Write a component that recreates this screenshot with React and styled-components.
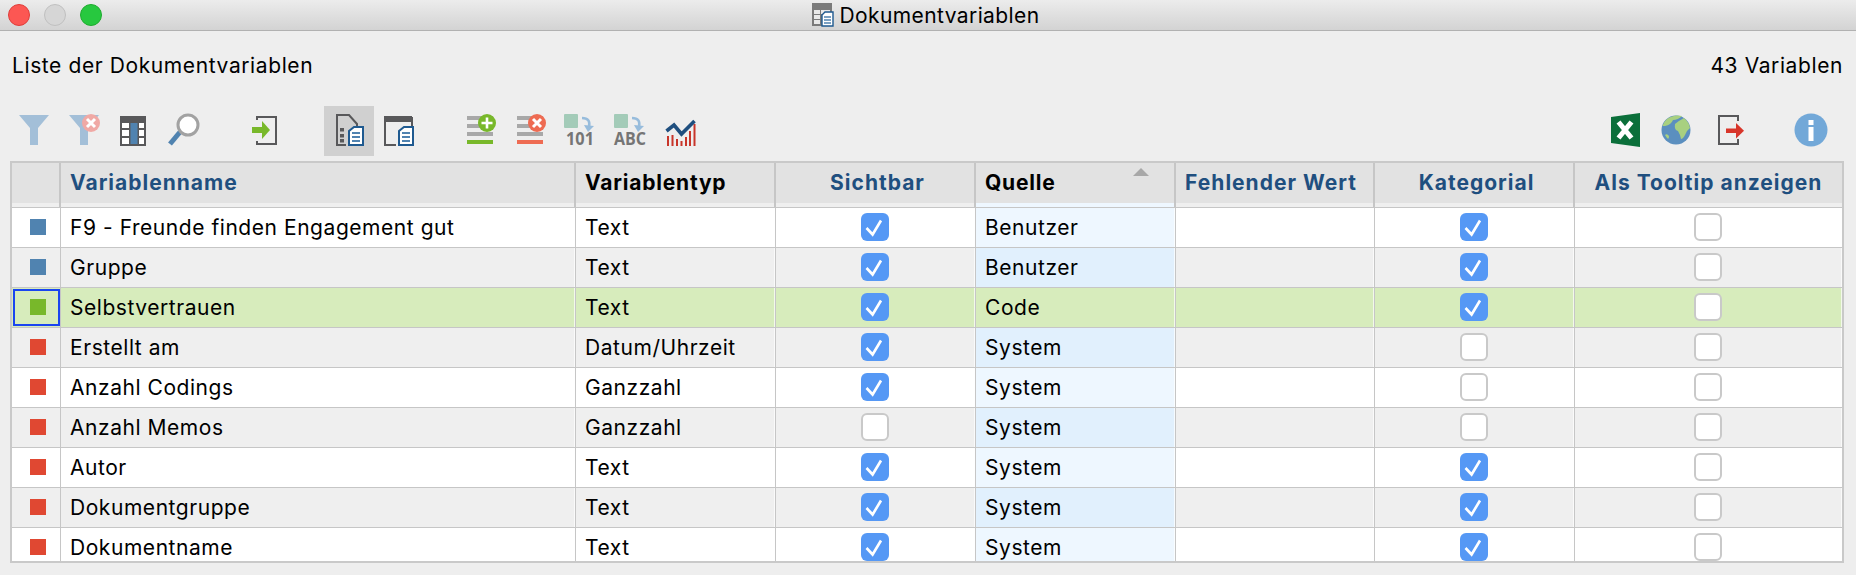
import React from 'react';
import styled, { createGlobalStyle } from 'styled-components';

const GlobalStyle = createGlobalStyle`
    html, body {
        margin: 0;
        padding: 0;
        height: 100%;
        background: #eeeeee;
        overflow: hidden;
    }
    body {
        font-family: Inter, "Liberation Sans", sans-serif;
        color: #000;
    }
`;

const Window = styled.div`
    width: 1856px;
    height: 575px;
    display: flex;
    flex-direction: column;
    overflow: hidden;
`;

const TitleBar = styled.div`
    height: 30px;
    flex: none;
    position: relative;
    display: flex;
    align-items: center;
    justify-content: center;
    gap: 5px;
    padding-right: 4px;
    background: linear-gradient(#ececec, #d3d3d3);
    border-bottom: 1px solid #b1b1b1;
    font-size: 21px;
    letter-spacing: 0.4px;
`;

const Lights = styled.div`
    position: absolute;
    left: 8px;
    top: 4px;
    display: flex;
    gap: 14px;
`;

const Light = styled.span`
    width: 22px;
    height: 22px;
    border-radius: 50%;
    box-sizing: border-box;
    background: ${p => p.$color};
    border: 1px solid ${p => p.$edge};
`;

const InfoRow = styled.div`
    display: flex;
    justify-content: space-between;
    padding: 23px 13px 0 12px;
    height: 24px;
    line-height: 24px;
    font-size: 21px;
    letter-spacing: 0.6px;
    flex: none;
`;

const Toolbar = styled.div`
    display: flex;
    padding: 0 20px 0 9px;
    height: 50px;
    margin-top: 28px;
    flex: none;
`;

const ToolGroup = styled.div`
    display: flex;
    margin-left: ${p => p.$offset || 0}px;
    gap: ${p => p.$gap || 0}px;
`;

const Spacer = styled.div`
    flex: 1;
`;

const ToolButton = styled.div`
    width: 50px;
    height: 50px;
    background: ${p => (p.$active ? '#d0d0d0' : 'transparent')};
    svg {
        display: block;
    }
`;

const Table = styled.div`
    margin: 5px 0 0 10px;
    width: 1834px;
    height: 402px;
    box-sizing: border-box;
    border: 2px solid #c9c9c9;
    overflow: hidden;
`;

const COLUMNS = '49px 515px 200px 200px 200px 199px 200px 267px';

const HeaderRow = styled.div`
    display: grid;
    grid-template-columns: ${COLUMNS};
    height: 44px;
    border-bottom: 1px solid #c6c6c6;
    box-sizing: content-box;
    background: #efefef;
`;

const HeaderCell = styled.div`
    position: relative;
    background: ${p => (p.$tinted ? '#eef7ff' : 'transparent')};
    border-right: 2px solid #c6c6c6;
    &:last-child {
        border-right: none;
    }
`;

const HeaderLabel = styled.div`
    height: 40px;
    line-height: 40px;
    background: #e2e2e2;
    padding-left: ${p => (p.$center ? Math.max(p.$nudge || 0, 0) : 9)}px;
    padding-right: ${p => (p.$center ? Math.max(-(p.$nudge || 0), 0) : 9)}px;
    text-align: ${p => (p.$center ? 'center' : 'left')};
    font-size: 21px;
    letter-spacing: ${p => (p.$sorted ? 0.8 : 1)}px;
    font-weight: 700;
    white-space: nowrap;
    color: ${p => (p.$sorted ? '#000' : '#1f4f7f')};
`;

const SortMark = styled.span`
    position: absolute;
    right: 25px;
    top: 5px;
    width: 0;
    height: 0;
    border-left: 8px solid transparent;
    border-right: 8px solid transparent;
    border-bottom: 8px solid #a8a8a8;
`;

const Row = styled.div`
    display: grid;
    grid-template-columns: ${COLUMNS};
    height: 39px;
    box-sizing: content-box;
    border-bottom: 1px solid #c6c6c6;
    background: ${p => p.$bg};
    font-size: 21px;
    letter-spacing: 0.55px;
`;

const Cell = styled.div`
    display: flex;
    align-items: center;
    justify-content: ${p => (p.$center ? 'center' : 'flex-start')};
    padding-bottom: ${p => (p.$center ? 2 : 0)}px;
    padding-left: ${p => (p.$center ? 0 : 9)}px;
    white-space: nowrap;
    background: ${p => p.$bg || 'transparent'};
    border-right: 1px solid #c6c6c6;
    box-shadow: inset -1px 0 0 rgba(255, 255, 255, 0.7);
    &:last-child {
        border-right: none;
    }
`;

const MarkerCell = styled.div`
    display: flex;
    align-items: center;
    justify-content: center;
    padding: 0 0 2px 3px;
    box-sizing: border-box;
    border-right: 1px solid #c6c6c6;
    outline: ${p => (p.$focused ? '2px solid #1a45f0' : 'none')};
    outline-offset: -3px;
`;

const Marker = styled.span`
    width: 16px;
    height: 16px;
    background: ${p => p.$color};
`;

const CheckBox = styled.span`
    width: 28px;
    height: 28px;
    margin-right: 2px;
    box-sizing: border-box;
    border-radius: 6px;
    display: flex;
    align-items: center;
    justify-content: center;
    background: ${p => (p.$checked ? '#5598f5' : '#fff')};
    border: ${p => (p.$checked ? 'none' : '2px solid #c9c9c9')};
`;

const Check = ({ on }) => (
    <CheckBox $checked={on}>
        {on && (
            <svg width="20" height="20" viewBox="0 0 20 20">
                <path d="M1.5 11 L7.6 17.5 L16 3.5" fill="none" stroke="#fff" strokeWidth="2.6" />
            </svg>
        )}
    </CheckBox>
);

const BLUE = '#5083b0';
const GREEN = '#78b82a';
const RED = '#e04832';
const GREY = '#58585a';
const DARKBLUE = '#1f5a90';

const Svg = ({ children }) => (
    <svg width="50" height="50" viewBox="0 0 50 50">
        {children}
    </svg>
);

const FunnelIcon = () => (
    <Svg>
        <polygon points="10,9 40,9 29,22 29,39 21,39 21,22" fill="#a3bfd8" />
    </Svg>
);

const FunnelClearIcon = () => (
    <Svg>
        <polygon points="10,9 40,9 29,22 29,39 21,39 21,22" fill="#a3bfd8" />
        <circle cx="32" cy="17" r="9" fill="#f0a9a5" />
        <path d="M28 13 L36 21 M36 13 L28 21" stroke="#fff" strokeWidth="3" />
    </Svg>
);

const TableIcon = () => (
    <Svg>
        <rect x="11" y="10" width="26" height="30" fill={GREY} />
        <rect x="13" y="17" width="7" height="5" fill="#fff" />
        <rect x="13" y="24" width="7" height="6" fill="#fff" />
        <rect x="13" y="32" width="7" height="6" fill="#fff" />
        <rect x="21.5" y="17" width="7" height="21" fill={BLUE} />
        <rect x="30" y="17" width="5" height="5" fill="#fff" />
        <rect x="30" y="24" width="5" height="6" fill="#fff" />
        <rect x="30" y="32" width="5" height="6" fill="#fff" />
    </Svg>
);

const SearchIcon = () => (
    <Svg>
        <path d="M21 26 L11 38" stroke={BLUE} strokeWidth="5" />
        <circle cx="29" cy="19" r="10" fill="#fff" stroke="#a2a2a2" strokeWidth="3" />
    </Svg>
);

const ImportIcon = () => (
    <Svg>
        <path d="M18 14 V11 H37 V38 H18 V35" fill="none" stroke={GREY} strokeWidth="2" />
        <rect x="13" y="21" width="11" height="6" fill={GREEN} />
        <polygon points="23,15 31,24 23,33" fill={GREEN} />
    </Svg>
);

const SmallDoc = () => (
    <g>
        <path d="M25 39 V25 L30 21 H39 V39 Z" fill="#fff" stroke={DARKBLUE} strokeWidth="2" />
        <path d="M28 27 H36 M28 31 H36 M28 35 H36" stroke={BLUE} strokeWidth="2" />
    </g>
);

const DocFieldsIcon = () => (
    <Svg>
        <path d="M22 39 H13 V9 H25 L33 18 V20" fill="none" stroke={GREY} strokeWidth="2" />
        <rect x="16" y="22" width="4" height="3.5" fill={GREY} />
        <rect x="16" y="28" width="4" height="3.5" fill={GREY} />
        <rect x="16" y="33" width="4" height="3.5" fill={GREY} />
        <SmallDoc />
    </Svg>
);

const WindowDocIcon = () => (
    <Svg>
        <path d="M22 39 H11 V12 H38 V20" fill="none" stroke={GREY} strokeWidth="2" />
        <rect x="10" y="10" width="28" height="6" fill={GREY} />
        <SmallDoc />
    </Svg>
);

const RowsIcon = ({ color, children }) => (
    <Svg>
        <rect x="11" y="10" width="26" height="4" fill="#a8a8a8" />
        <rect x="11" y="18" width="26" height="4" fill="#a8a8a8" />
        <rect x="11" y="26" width="26" height="4" fill="#a8a8a8" />
        <rect x="11" y="34" width="26" height="4" fill={color} />
        <circle cx="31" cy="17" r="9" fill={color} />
        {children}
    </Svg>
);

const ConvertIcon = ({ label, width, x }) => (
    <Svg>
        <rect x="8" y="8" width="14" height="14" rx="1" fill="#a3cbb8" />
        <path d="M26 12 Q35 12 33 21" fill="none" stroke="#97bcdc" strokeWidth="2.5" />
        <polygon points="28,19 38,20 32,26" fill="#97bcdc" />
        <text
            x={x}
            y="38.5"
            textLength={width}
            lengthAdjust="spacingAndGlyphs"
            fontFamily="Open Sans, sans-serif"
            fontWeight="700"
            fontSize="17"
            fill="#757575"
        >
            {label}
        </text>
    </Svg>
);

const ChartIcon = () => (
    <Svg>
        <path
            d="M11 30 H13 V40 H11 Z M15.5 29 H17.5 V40 H15.5 Z M20 33 H22 V40 H20 Z M24.5 35 H26.5 V40 H24.5 Z M29 31 H31 V40 H29 Z M33 25 H35 V40 H33 Z M37.5 18 H39.5 V40 H37.5 Z"
            fill="#c8352a"
        />
        <path d="M10.5 25 L18 19 L25.5 28 L38.5 15" fill="none" stroke="#1f4f7f" strokeWidth="3.6" />
    </Svg>
);

const ExcelIcon = () => (
    <Svg>
        <polygon points="11,11 40,7 40,41 11,37" fill="#0b6f3a" />
        <path d="M18.5 16 L31.5 32 M31.5 16 L18.5 32" stroke="#fff" strokeWidth="5" />
    </Svg>
);

const GlobeIcon = () => (
    <Svg>
        <circle cx="25" cy="24" r="14.5" fill="#5b8fbf" />
        <path
            d="M16 13 Q23 8 31 10 Q27 14 22 14 Q20 19 14 20 L11.5 20 Q12.5 16 16 13 Z M24 18 Q29 14 33 12 Q38 16 39 22 Q36 24 34 29 Q32 33 30 33 Q29 28 27 25 Q23 24 24 18 Z M14 29 Q16 27 18 30 Q18 34 16 32 Z"
            fill="#a8d080"
        />
    </Svg>
);

const ExitIcon = () => (
    <Svg>
        <path d="M33 15 V10 H14 V38 H33 V33" fill="none" stroke={GREY} strokeWidth="2" />
        <rect x="21" y="22.5" width="11" height="4.5" fill="#d8352a" />
        <polygon points="31,17 39,24.7 31,32.5" fill="#d8352a" />
    </Svg>
);

const InfoIcon = () => (
    <Svg>
        <circle cx="25" cy="24" r="16.5" fill="#72a8d8" />
        <rect x="22.5" y="14" width="5" height="5" fill="#fff" />
        <rect x="22.5" y="21" width="5" height="14" fill="#fff" />
    </Svg>
);

const TitleIcon = () => (
    <svg width="22" height="24" viewBox="0 0 22 24">
        <rect x="0" y="0" width="20" height="23" fill="#7a7a7a" />
        <path d="M2 7 H8 V11 H2 Z M9 7 H18 V11 H9 Z M2 12 H8 V16 H2 Z M2 17 H8 V21 H2 Z" fill="#e8e8e8" />
        <path d="M10 23 V12 L13 9 H21 V23 Z" fill="#fff" stroke={DARKBLUE} strokeWidth="1.4" />
        <path d="M12 14 H19 M12 17 H19 M12 20 H19" stroke={BLUE} strokeWidth="1.4" />
    </svg>
);

const headers = [
    { label: '' },
    { label: 'Variablenname' },
    { label: 'Variablentyp', sorted: true },
    { label: 'Sichtbar', center: true, nudge: 5 },
    { label: 'Quelle', sorted: true, tinted: true, mark: true },
    { label: 'Fehlender Wert', center: true, nudge: -7 },
    { label: 'Kategorial', center: true, nudge: 5 },
    { label: 'Als Tooltip anzeigen', center: true },
];

const rows = [
    ['F9 - Freunde finden Engagement gut', 'Text', true, 'Benutzer', true, BLUE],
    ['Gruppe', 'Text', true, 'Benutzer', true, BLUE],
    ['Selbstvertrauen', 'Text', true, 'Code', true, GREEN],
    ['Erstellt am', 'Datum/Uhrzeit', true, 'System', false, RED],
    ['Anzahl Codings', 'Ganzzahl', true, 'System', false, RED],
    ['Anzahl Memos', 'Ganzzahl', false, 'System', false, RED],
    ['Autor', 'Text', true, 'System', true, RED],
    ['Dokumentgruppe', 'Text', true, 'System', true, RED],
    ['Dokumentname', 'Text', true, 'System', true, RED],
];

const App = () => {
    return (
        <Window>
            <GlobalStyle />
            <TitleBar>
                <Lights>
                    <Light $color="#fc5753" $edge="#df3d3a" />
                    <Light $color="#d6d6d6" $edge="#c0c0c0" />
                    <Light $color="#27c83f" $edge="#1eab2e" />
                </Lights>
                <TitleIcon />
                Dokumentvariablen
            </TitleBar>
            <InfoRow>
                <span>Liste der Dokumentvariablen</span>
                <span>43 Variablen</span>
            </InfoRow>
            <Toolbar>
                <ToolGroup>
                    <ToolButton><FunnelIcon /></ToolButton>
                    <ToolButton><FunnelClearIcon /></ToolButton>
                    <ToolButton><TableIcon /></ToolButton>
                    <ToolButton><SearchIcon /></ToolButton>
                </ToolGroup>
                <ToolGroup $offset={30}>
                    <ToolButton><ImportIcon /></ToolButton>
                </ToolGroup>
                <ToolGroup $offset={35}>
                    <ToolButton $active><DocFieldsIcon /></ToolButton>
                    <ToolButton><WindowDocIcon /></ToolButton>
                </ToolGroup>
                <ToolGroup $offset={32}>
                    <ToolButton>
                        <RowsIcon color={GREEN}>
                            <path d="M31 11.5 V22.5 M25.5 17 H36.5" stroke="#fff" strokeWidth="2.6" />
                        </RowsIcon>
                    </ToolButton>
                    <ToolButton>
                        <RowsIcon color="#ee6b52">
                            <path d="M27 13 L35 21 M35 13 L27 21" stroke="#fff" strokeWidth="3" />
                        </RowsIcon>
                    </ToolButton>
                    <ToolButton><ConvertIcon label="101" x={10} width={28} /></ToolButton>
                    <ToolButton><ConvertIcon label="ABC" x={8} width={32} /></ToolButton>
                    <ToolButton><ChartIcon /></ToolButton>
                </ToolGroup>
                <Spacer />
                <ToolGroup $gap={1}>
                    <ToolButton><ExcelIcon /></ToolButton>
                    <ToolButton><GlobeIcon /></ToolButton>
                </ToolGroup>
                <ToolGroup $offset={4}>
                    <ToolButton><ExitIcon /></ToolButton>
                </ToolGroup>
                <ToolGroup $offset={31}>
                    <ToolButton><InfoIcon /></ToolButton>
                </ToolGroup>
            </Toolbar>
            <Table>
                <HeaderRow>
                    {headers.map((h, i) => (
                        <HeaderCell key={i} $tinted={h.tinted}>
                            <HeaderLabel $center={h.center} $sorted={h.sorted} $nudge={h.nudge}>{h.label}</HeaderLabel>
                            {h.mark && <SortMark />}
                        </HeaderCell>
                    ))}
                </HeaderRow>
                {rows.map((r, i) => {
                    const selected = i === 2;
                    const even = i % 2 === 1;
                    const rowBg = selected ? '#d7ecbc' : even ? '#efefef' : '#fff';
                    const tint = selected ? '' : even ? '#e1f0fd' : '#eef7ff';
                    return (
                        <Row key={r[0]} $bg={rowBg}>
                            <MarkerCell $focused={selected}><Marker $color={r[5]} /></MarkerCell>
                            <Cell>{r[0]}</Cell>
                            <Cell>{r[1]}</Cell>
                            <Cell $center><Check on={r[2]} /></Cell>
                            <Cell $bg={tint}>{r[3]}</Cell>
                            <Cell />
                            <Cell $center><Check on={r[4]} /></Cell>
                            <Cell $center><Check on={false} /></Cell>
                        </Row>
                    );
                })}
            </Table>
        </Window>
    );
};

export default App;
